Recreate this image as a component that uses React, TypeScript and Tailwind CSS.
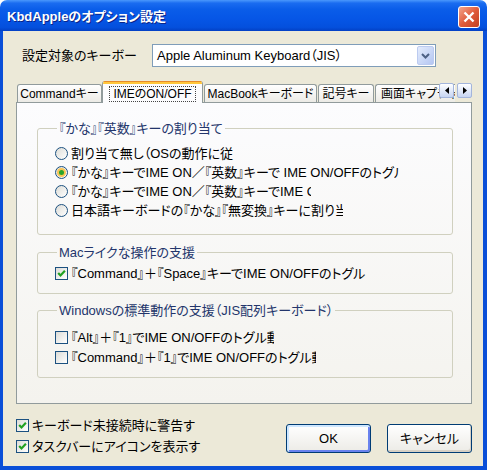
import React from "react";

function CheckBox({ checked }: { checked?: boolean }) {
  return (
    <span className="w-[13px] h-[13px] shrink-0 border border-[#1c5180] bg-linear-to-br from-[#dcdcd7] to-white flex items-center justify-center">
      {checked && (
        <svg width="9" height="9" viewBox="0 0 9 9">
          <path d="M1.2 4 L3.5 6.4 L7.9 1.8" fill="none" stroke="#21a121" strokeWidth="2.2" />
        </svg>
      )}
    </span>
  );
}

function Radio({ checked }: { checked?: boolean }) {
  return (
    <span className="w-[13px] h-[13px] shrink-0 rounded-full border border-[#1c5180] bg-linear-to-br from-[#dcdcd7] to-white flex items-center justify-center">
      {checked && (
        <span className="w-[9px] h-[9px] rounded-full bg-[#f8c555] flex items-center justify-center">
          <span className="w-[5px] h-[5px] rounded-full bg-[#2aa52a]" />
        </span>
      )}
    </span>
  );
}

// last glyph is cut off in the original controls
function Cut({ ch, w }: { ch: string; w: string }) {
  return <span className={`inline-block overflow-hidden align-top ${w}`}>{ch}</span>;
}

function Row({
  radio,
  checked,
  h = "h-[19px]",
  children,
}: {
  radio?: boolean;
  checked?: boolean;
  h?: string;
  children: React.ReactNode;
}) {
  return (
    <div className={`flex items-center gap-[3px] whitespace-nowrap ${h}`}>
      {radio ? <Radio checked={checked} /> : <CheckBox checked={checked} />}
      <span className="leading-[15px]">{children}</span>
    </div>
  );
}

function Group({
  title,
  className,
  children,
}: {
  title: string;
  className: string;
  children: React.ReactNode;
}) {
  return (
    <fieldset className={`border border-[#d0d0bf] rounded-[3px] pl-[17px] ${className}`}>
      <legend className="ml-[2px] px-[2px] leading-[15px] text-[#23356b] whitespace-nowrap">{title}</legend>
      {children}
    </fieldset>
  );
}

function Tab({ w, children }: { w: string; children: React.ReactNode }) {
  return (
    <div
      className={`ml-[1px] h-[18px] shrink-0 rounded-t-[3px] border-x border-t border-[#919b9c] bg-linear-to-b from-white to-[#ecebe6] text-[12px] leading-[16px] flex items-center justify-center whitespace-nowrap overflow-hidden ${w}`}
    >
      {children}
    </div>
  );
}

export default function App() {
  return (
    <div className="w-[487px] h-[470px] flex flex-col text-[13px] text-black font-['Liberation_Sans','Noto_Sans_CJK_JP',sans-serif] [font-feature-settings:'palt']">
      <div className="h-[31px] shrink-0 rounded-t-[7px] bg-[linear-gradient(to_bottom,#4a98fc_0%,#1a6cf0_10%,#0a5de9_30%,#0656e6_60%,#0450dd_88%,#0340c4_100%)] flex items-center justify-between pl-[7px] pr-[7px] pt-[2px]">
        <span className="text-white font-bold text-[13px] [text-shadow:1px_1px_#0b2488]">
          KbdAppleのオプション設定
        </span>
        <span className="w-[22px] h-[22px] rounded-[3px] border border-white bg-linear-to-br from-[#f2a48c] via-[#e05c3c] to-[#c2401f] flex items-center justify-center">
          <svg width="12" height="12" viewBox="0 0 12 12">
            <path d="M1.5 1.5 L10.5 10.5 M10.5 1.5 L1.5 10.5" stroke="white" strokeWidth="2.4" />
          </svg>
        </span>
      </div>

      <div className="flex-1 flex flex-col bg-[#ece9d8] border-l-[3px] border-r-[4px] border-b-[4px] border-[#0a4fd8] pl-[13px] pr-[11px]">
        <div className="mt-[13px] h-[23px] flex items-center">
          <span className="ml-[6px] w-[130px] whitespace-nowrap">設定対象のキーボー</span>
          <div className="w-[284px] h-[23px] border border-[#7f9db9] bg-white flex items-center justify-between">
            <span className="pl-[4px] whitespace-nowrap">Apple Aluminum Keyboard（JIS）</span>
            <span className="w-[17px] h-[19px] mr-[1px] rounded-[2px] border border-[#bccbf0] bg-linear-to-br from-[#e4ecfc] to-[#b4c6f2] flex items-center justify-center">
              <svg width="9" height="6" viewBox="0 0 9 6">
                <path d="M1 1 L4.5 4.5 L8 1" fill="none" stroke="#4d6185" strokeWidth="2" />
              </svg>
            </span>
          </div>
        </div>

        <div className="relative mt-[14px] h-[21px] flex items-end">
          <Tab w="w-[85px]">Commandキー</Tab>
          <div className="relative z-10 -mb-px w-[101px] h-[22px] shrink-0 rounded-t-[3px] overflow-hidden border-x border-[#919b9c] bg-[#fcfcfe] flex flex-col">
            <div className="h-[3px] bg-[#ffc73c] border-t border-[#e68b2c]" />
            <div className="flex-1 flex items-center justify-center">
              <span className="border border-dotted border-[#444] px-[3px] text-[12px] leading-[14px] whitespace-nowrap">
                IMEのON/OFF
              </span>
            </div>
          </div>
          <Tab w="w-[113px]">MacBookキーボード</Tab>
          <Tab w="w-[56px]">記号キー</Tab>
          <div className="ml-[1px] w-[80px] h-[18px] shrink-0 rounded-tl-[3px] border-l border-t border-[#919b9c] bg-linear-to-b from-white to-[#ecebe6] text-[12px] leading-[16px] flex items-center pl-[5px] whitespace-nowrap overflow-hidden">
            画面キャプチャ
          </div>
          <div className="absolute right-0 top-[2px] flex gap-[3px]">
            <span className="w-[15px] h-[15px] rounded-[2px] border border-[#a3b5dc] bg-linear-to-b from-white to-[#c7d5f2] flex items-center justify-center">
              <svg width="4" height="7" viewBox="0 0 4 7">
                <path d="M4 0 L0 3.5 L4 7 Z" fill="#000" />
              </svg>
            </span>
            <span className="w-[15px] h-[15px] rounded-[2px] border border-[#a3b5dc] bg-linear-to-b from-white to-[#c7d5f2] flex items-center justify-center">
              <svg width="4" height="7" viewBox="0 0 4 7">
                <path d="M0 0 L4 3.5 L0 7 Z" fill="#000" />
              </svg>
            </span>
          </div>
        </div>

        <div className="h-[302px] shrink-0 border border-[#919b9c] bg-linear-to-b from-[#fcfcfe] to-[#f4f3ee] pl-[20px] pr-[18px] pt-[18px] flex flex-col">
          <Group title="『かな』『英数』キーの割り当て" className="pt-[8px] pb-[14px]">
            <Row radio>割り当て無し（OSの動作に従</Row>
            <Row radio checked>
              『かな』キーでIME ON／『英数』キーで IME ON/OFFのトグ
              <Cut ch="ル" w="w-[5px]" />
            </Row>
            <Row radio>
              『かな』キーでIME ON／『英数』キーでIME <Cut ch="O" w="w-[4px]" />
            </Row>
            <Row radio>
              日本語キーボードの『かな』『無変換』キーに割り
              <Cut ch="当" w="w-[8px]" />
            </Row>
          </Group>

          <Group title="Macライクな操作の支援" className="mt-[10px] pt-[4px] pb-[10px]">
            <Row checked>『Command』＋『Space』キーでIME ON/OFFのトグル</Row>
          </Group>

          <Group title="Windowsの標準動作の支援（JIS配列キーボード）" className="mt-[9px] pt-[9px] pb-[10px]">
            <Row h="h-[20px]">
              『Alt』＋『1』でIME ON/OFFのトグル
              <Cut ch="動" w="w-[7px]" />
            </Row>
            <Row h="h-[20px]">
              『Command』＋『1』でIME ON/OFFのトグル
              <Cut ch="動" w="w-[4px]" />
            </Row>
          </Group>
        </div>

        <div className="flex-1 flex justify-between items-start">
          <div className="mt-[11px] flex flex-col">
            <Row checked h="h-[21px]">
              キーボード未接続時に警告す
            </Row>
            <Row checked h="h-[21px]">
              タスクバーにアイコンを表示す
            </Row>
          </div>
          <div className="mt-[20px] flex gap-[16px]">
            <button className="w-[85px] h-[29px] rounded-[3px] border border-[#003c74] bg-linear-to-b from-white to-[#ecebe6] shadow-[inset_1px_1px_0_1px_#cee7ff,inset_-1px_-1px_0_1px_#6982ee]">
              OK
            </button>
            <button className="w-[85px] h-[29px] rounded-[3px] border border-[#003c74] bg-linear-to-b from-white to-[#ecebe6] shadow-[inset_-1px_-2px_0_0_#d6d0c5]">
              キャンセル
            </button>
          </div>
        </div>
      </div>
    </div>
  );
}
